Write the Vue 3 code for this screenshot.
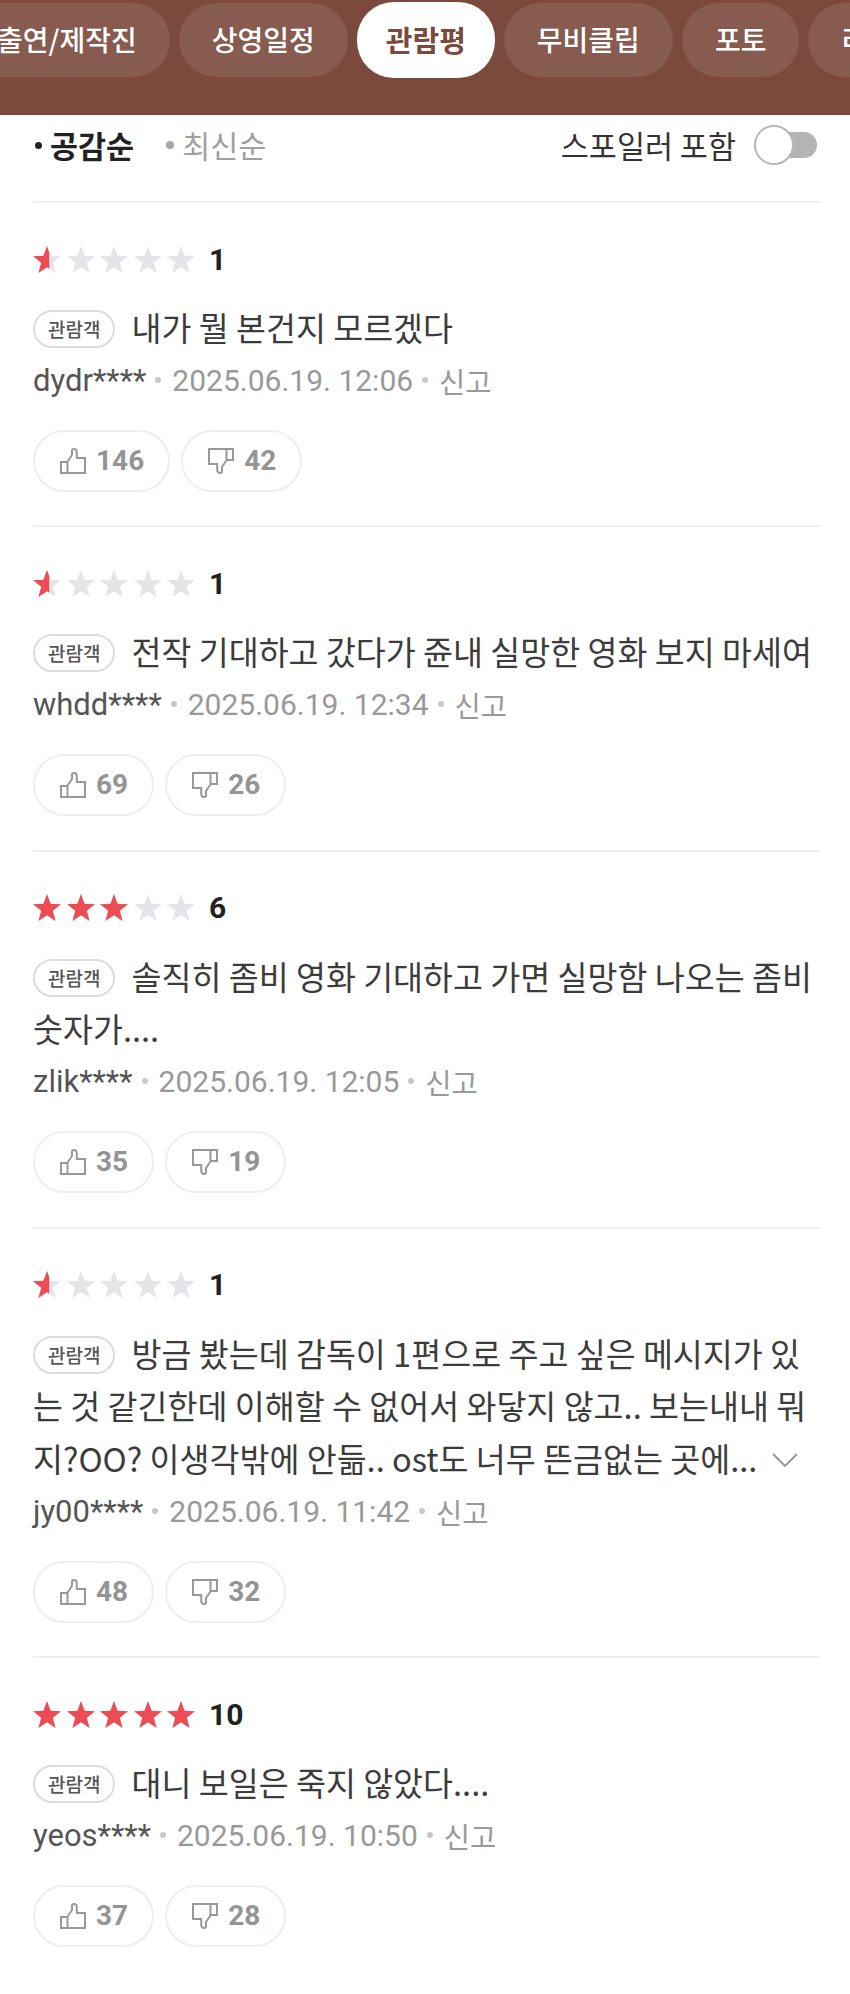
<script setup>
const tabs = [
  { label: '출연/제작진' },
  { label: '상영일정' },
  { label: '관람평', active: true },
  { label: '무비클립' },
  { label: '포토' },
  { label: '리뷰' },
]

const reviews = [
  { score: 1, text: '내가 뭘 본건지 모르겠다', author: 'dydr****', date: '2025.06.19. 12:06', up: 146, down: 42 },
  { score: 1, text: '전작 기대하고 갔다가 쥰내 실망한 영화 보지 마세여', author: 'whdd****', date: '2025.06.19. 12:34', up: 69, down: 26 },
  { score: 6, text: '솔직히 좀비 영화 기대하고 가면 실망함 나오는 좀비 숫자가....', author: 'zlik****', date: '2025.06.19. 12:05', up: 35, down: 19 },
  { score: 1, text: '방금 봤는데 감독이 1편으로 주고 싶은 메시지가 있는 것 같긴한데 이해할 수 없어서 와닿지 않고.. 보는내내 뭐지?OO? 이생각밖에 안듦.. ost도 너무 뜬금없는 곳에...', more: true, author: 'jy00****', date: '2025.06.19. 11:42', up: 48, down: 32 },
  { score: 10, text: '대니 보일은 죽지 않았다....', author: 'yeos****', date: '2025.06.19. 10:50', up: 37, down: 28 },
]

const starPoints = '14,0 17.6,9.8 28,10.3 19.8,16.8 22.6,27 14,21.2 5.4,27 8.2,16.8 0,10.3 10.4,9.8'
const starClass = (score, i) => {
  const filled = score / 2 - i
  if (filled >= 1) return 'on'
  if (filled > 0) return 'half'
  return 'off'
}
</script>

<template>
  <div class="page">
    <nav class="tabs">
      <div v-for="t in tabs" :key="t.label" class="tab" :class="{ active: t.active }">{{ t.label }}</div>
    </nav>

    <div class="sortbar">
      <div class="sorts">
        <span class="sort current"><i class="bullet"></i>공감순</span>
        <span class="sort"><i class="bullet"></i>최신순</span>
      </div>
      <div class="spoiler">
        <span>스포일러 포함</span>
        <span class="toggle"><i class="knob"></i></span>
      </div>
    </div>

    <ul class="list">
      <li v-for="r in reviews" :key="r.author" class="item">
        <div class="rating">
          <div class="stars">
            <svg v-for="i in 5" :key="i" class="star" viewBox="0 0 28 27">
              <polygon class="bg" :points="starPoints" />
              <polygon class="fg" :class="starClass(r.score, i - 1)" :points="starPoints" />
            </svg>
          </div>
          <strong class="score">{{ r.score }}</strong>
        </div>
        <p class="body">
          <span class="chip">관람객</span>{{ r.text }}<svg v-if="r.more" class="chev" viewBox="0 0 28 14"><path d="M2 1 L14 13 L26 1" /></svg>
        </p>
        <div class="meta">
          <span class="author">{{ r.author }}</span>
          <i class="dot"></i>
          <span>{{ r.date }}</span>
          <i class="dot"></i>
          <span class="report">신고</span>
        </div>
        <div class="votes">
          <button class="vote">
            <svg class="thumb" viewBox="0 0 26 26"><path d="M1 14 H7.5 V25 H1 Z M7.5 13.5 L12 7 V2.5 C12 1.2 13 1 14 1 C15.6 1 16.8 2.4 16.8 4.4 V10 H25 V25 H7.5" /></svg>
            {{ r.up }}
          </button>
          <button class="vote no">
            <svg class="thumb down" viewBox="0 0 26 26"><path d="M1 14 H7.5 V25 H1 Z M7.5 13.5 L12 7 V2.5 C12 1.2 13 1 14 1 C15.6 1 16.8 2.4 16.8 4.4 V10 H25 V25 H7.5" /></svg>
            {{ r.down }}
          </button>
        </div>
      </li>
    </ul>
  </div>
</template>

<style scoped>
.page {
  width: 850px;
  height: 1994px;
  overflow: hidden;
  background: #fff;
  font-family: "Noto Sans CJK KR", "Noto Sans", sans-serif;
  color: #333;
}
.tabs {
  height: 115px;
  box-sizing: border-box;
  padding-top: 3px;
  background: #7b4a3c;
  display: flex;
  align-items: flex-start;
  gap: 9px;
  overflow: hidden;
}
.tab {
  flex: none;
  height: 74px;
  line-height: 72px;
  padding: 0 33px;
  border-radius: 37px;
  background: #875b4f;
  color: #fff;
  font-size: 28px;
  font-weight: 500;
  white-space: nowrap;
}
.tab:first-child {
  margin-left: -36px;
}
.tab.active {
  height: 76px;
  margin-top: -1px;
  line-height: 74px;
  background: #fff;
  color: #7b4a3c;
  font-size: 29px;
  font-weight: 700;
  padding: 0 29px;
}
.sortbar {
  height: 86px;
  box-sizing: border-box;
  margin: 0 33px;
  padding-bottom: 26px;
  display: flex;
  align-items: center;
  justify-content: space-between;
}
.sorts {
  display: flex;
  gap: 32px;
}
.sort {
  display: flex;
  align-items: center;
  gap: 8px;
  font-size: 30.5px;
  line-height: 44px;
  color: #a0a0a0;
}
.sort .bullet {
  width: 8px;
  height: 8px;
  border-radius: 50%;
  background: #a8a8a8;
}
.sort.current {
  color: #222;
  font-weight: 700;
}
.sort.current .bullet {
  width: 7px;
  height: 7px;
  background: #222;
  margin-left: 2px;
}
.spoiler {
  display: flex;
  align-items: center;
  gap: 18px;
  font-size: 30.5px;
  line-height: 44px;
  color: #333;
}
.toggle {
  position: relative;
  width: 63px;
  height: 26px;
  border-radius: 13px;
  background: #b4b4b4;
}
.knob {
  position: absolute;
  left: 0;
  top: -7px;
  width: 40px;
  height: 40px;
  box-sizing: border-box;
  border-radius: 50%;
  background: #fff;
  border: 2px solid #b8b8b8;
}
.list {
  list-style: none;
  margin: 0;
  padding: 0;
}
.item {
  margin: 0 30px 0 33px;
  padding: 42px 0 33.8px;
  border-top: 2px solid #eeeeee;
}
.rating {
  display: flex;
  align-items: center;
  height: 28px;
}
.stars {
  display: flex;
  gap: 5.5px;
}
.star {
  width: 28px;
  height: 27px;
  display: block;
}
.bg {
  fill: #e3e5e8;
}
.fg {
  fill: #ee4c54;
}
.fg.off {
  display: none;
}
.fg.half {
  clip-path: inset(0 42% 0 0);
}
.score {
  margin-left: 14px;
  font-family: Roboto, sans-serif;
  font-size: 30px;
  font-weight: 700;
  color: #222;
}
.body {
  margin: 28px 0 0;
  font-size: 32.6px;
  line-height: 52.6px;
  color: #3c3c3c;
}
.chip {
  display: inline-block;
  box-sizing: border-box;
  height: 38px;
  line-height: 34px;
  padding: 0 13px;
  margin-right: 16px;
  border: 2px solid #dcdcdc;
  border-radius: 19px;
  font-size: 19px;
  font-weight: 500;
  color: #555;
  vertical-align: 4px;
}
.chev {
  width: 28px;
  height: 14px;
  margin-left: 14px;
  vertical-align: 5px;
  fill: none;
  stroke: #9a9a9a;
  stroke-width: 2;
}
.meta {
  display: flex;
  align-items: center;
  height: 53px;
  font-family: Roboto, "Noto Sans CJK KR", sans-serif;
  font-size: 30px;
  color: #999;
}
.author {
  color: #555;
  font-size: 31px;
}
.report {
  font-size: 28.5px;
}
.dot {
  width: 6px;
  height: 6px;
  margin: 0 11px 0 9px;
  border-radius: 50%;
  background: #c8c8c8;
}
.votes {
  display: flex;
  gap: 11px;
  margin-top: 23px;
}
.vote {
  display: flex;
  align-items: center;
  gap: 10px;
  height: 62px;
  padding: 0 24px 0 25px;
  background: #fff;
  border: 2px solid #eeeeee;
  border-radius: 31px;
  font-family: Roboto, sans-serif;
  font-size: 28px;
  font-weight: 700;
  color: #949494;
}
.vote.no {
  padding: 0 24px 0 25px;
}
.thumb {
  width: 26px;
  height: 26px;
  fill: none;
  stroke: #999;
  stroke-width: 2;
}
.thumb.down {
  transform: rotate(180deg);
}
</style>
